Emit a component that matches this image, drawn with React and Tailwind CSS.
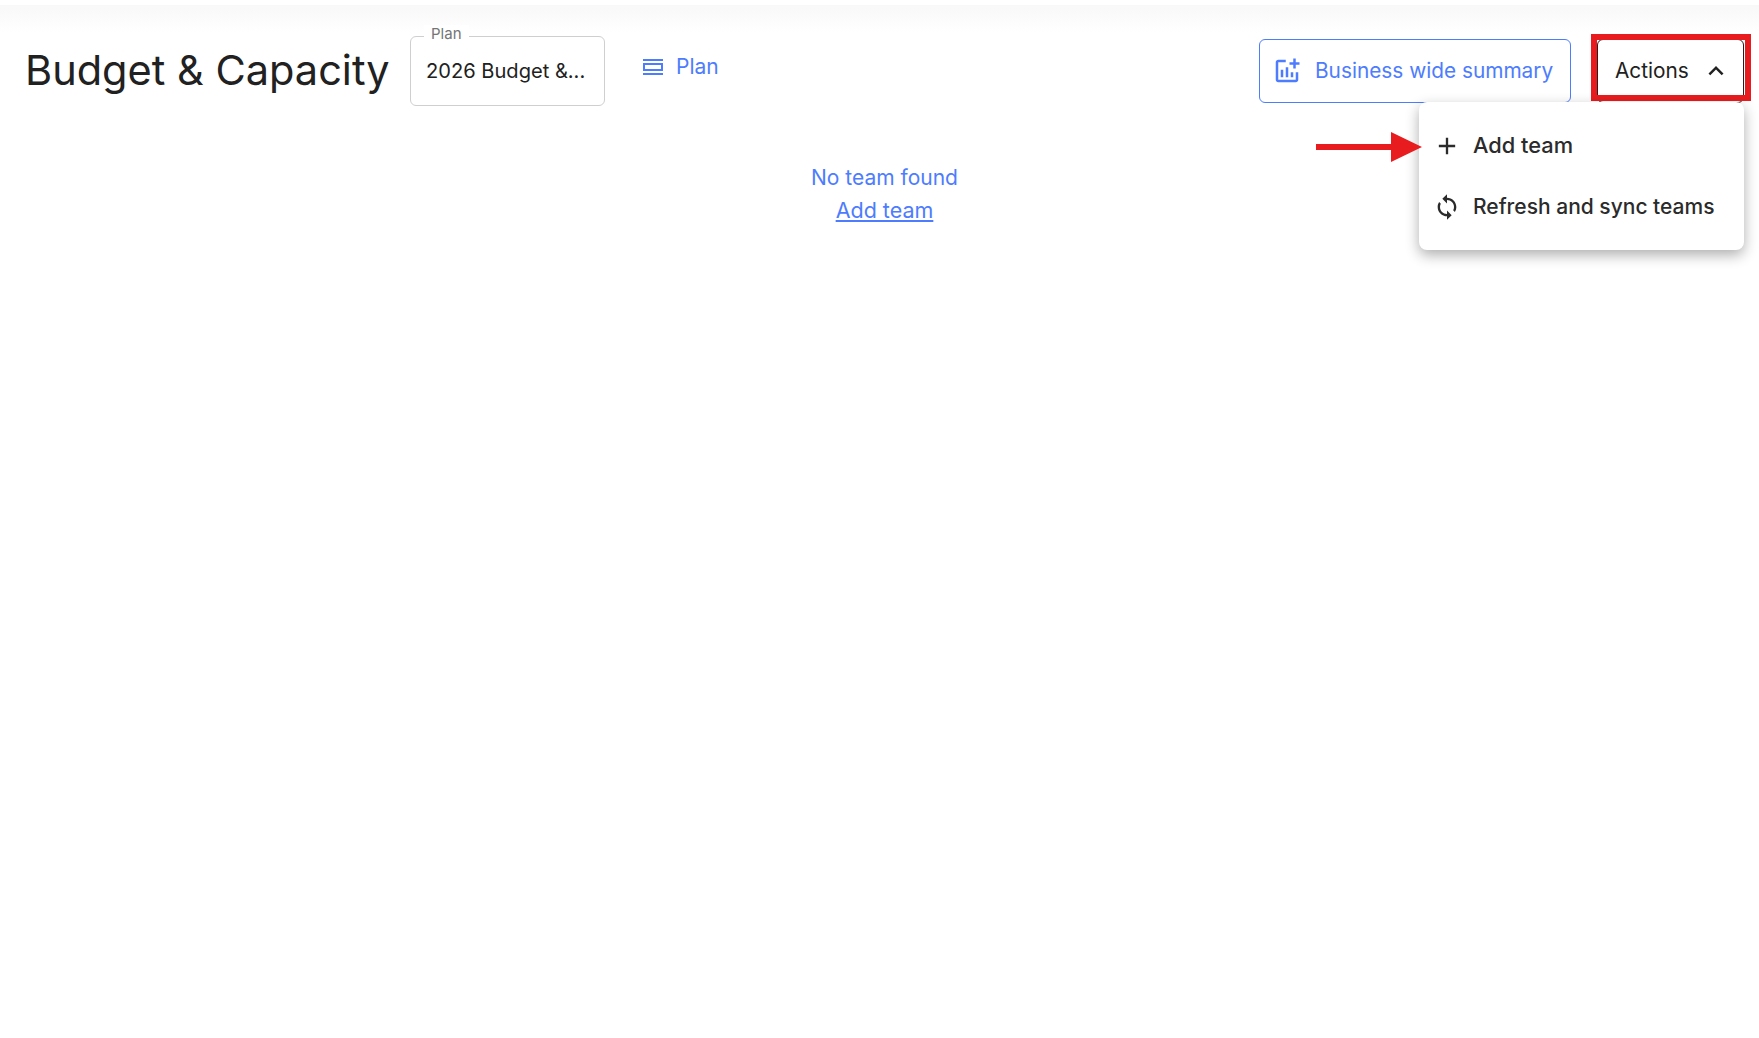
import React from 'react';

const BLUE = 'text-[#4d7cfe]';

const Icon = ({ d, className }) => (
  <svg viewBox="0 0 24 24" fill="currentColor" className={className}>
    <path d={d} />
  </svg>
);

const ViewIcon = ({ className }) => (
  <svg viewBox="0 0 20 16" fill="none" className={className}>
    <path d="M0 1h20M0 15h20" stroke="currentColor" strokeWidth="2" />
    <rect x="1" y="5" width="18" height="6" stroke="currentColor" strokeWidth="2" />
  </svg>
);

const ActionsMenu = () => (
  <div className="absolute top-[62px] -right-px w-[325px] h-[148px] pt-[13px] bg-white rounded-lg shadow-[0_5px_14px_rgba(0,0,0,0.32)] z-10 text-[#2b2b2b]">
    <div className="flex items-center h-[61px] pl-[14px] gap-3 font-medium text-[21.8px]">
      <Icon d="M19 13h-6v6h-2v-6H5v-2h6V5h2v6h6v2z" className="w-7 h-7" />
      Add team
    </div>
    <div className="flex items-center h-[61px] pl-[14px] gap-3 font-medium text-[21px] whitespace-nowrap">
      <Icon
        d="M12 4V1L8 5l4 4V6c3.31 0 6 2.69 6 6 0 1.01-.25 1.97-.7 2.8l1.46 1.46C19.54 15.03 20 13.57 20 12c0-4.42-3.58-8-8-8zm0 14c-3.31 0-6-2.69-6-6 0-1.01.25-1.97.7-2.8L5.24 7.74C4.46 8.97 4 10.43 4 12c0 4.42 3.58 8 8 8v3l4-4-4-4v3z"
        className="w-7 h-7"
      />
      Refresh and sync teams
    </div>
  </div>
);

const App = () => {
  return (
    <div className="relative min-h-[1038px] bg-white pt-[5px] font-['Inter',sans-serif] overflow-hidden">
      <div className="h-[28px] bg-gradient-to-b from-[#f8f8f8] to-white" />

      {/* Header */}
      <div className="flex items-center h-[70px] mt-[2px] pl-[25px] pr-[15px]">
        <h1 className="text-[41.5px] font-normal text-[#212121] whitespace-nowrap w-[385px]">
          Budget &amp; Capacity
        </h1>

        <div className="relative w-[195px] h-[70px] mt-[2px] border border-[#cfcfcf] rounded-md flex items-center pl-[15px] text-[20.1px] text-[#212121] whitespace-nowrap">
          <span className="absolute -top-[12px] left-[13px] px-[7px] bg-white text-[15px] leading-[18px] text-[#757575]">Plan</span>
          2026 Budget &amp;...
        </div>

        <div className={`flex items-center gap-[13px] ml-[38px] mb-[6px] text-[21px] ${BLUE}`}>
          <ViewIcon className="w-5 h-4" />
          Plan
        </div>

        <div className={`ml-auto flex items-center w-[312px] h-[64px] mt-[2px] pl-3 gap-[13px] border border-[#4d7cfe] rounded-md text-[20.8px] whitespace-nowrap ${BLUE}`}>
          <Icon
            d="M22 5v2h-3v3h-2V7h-3V5h3V2h2v3h3zm-3 14H5V5h6V3H5c-1.1 0-2 .9-2 2v14c0 1.1.9 2 2 2h14c1.1 0 2-.9 2-2v-6h-2v6zm-4-6v4h2v-4h-2zm-4 4h2V9h-2v8zm-2 0v-6H7v6h2z"
            className="w-[30px] h-[30px] shrink-0"
          />
          Business wide summary
        </div>

        <div className="relative ml-[26px] mt-[2px] flex items-center justify-between w-[147px] h-[64px] pl-[17px] pr-3 text-[20.8px] text-[#212121] border border-[#212121] rounded-md">
          Actions
          <Icon d="m12 8-6 6 1.41 1.41L12 10.83l4.59 4.58L18 14z" className="w-[30px] h-[30px]" />
          {/* annotation frame */}
          <div className="absolute -top-[6px] -left-[7px] -right-[8px] h-[67px] border-[6px] border-[#e81c1f]" />
          <ActionsMenu />
        </div>
      </div>

      {/* Annotation arrow */}
      <svg viewBox="0 0 106 30" className="absolute top-[132px] left-[1316px] w-[106px] h-[30px] z-20">
        <path d="M0 12h75V0l31 15-31 15V18H0z" fill="#e81c1f" />
      </svg>

      {/* Empty state */}
      <div className={`flex flex-col items-center w-[1769px] mt-[57px] leading-[32px] ${BLUE}`}>
        <p className="text-[21px]">No team found</p>
        <p className="text-[21.5px] underline">Add team</p>
      </div>
    </div>
  );
};

export default App;
